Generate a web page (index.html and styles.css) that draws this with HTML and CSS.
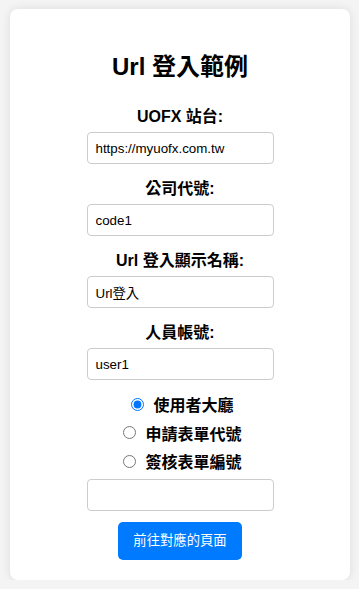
FILE: index.html
```html
<!DOCTYPE html>
<html lang="zh-Hant">
<head>
<meta charset="utf-8">
<title>Url 登入範例</title>
<link rel="stylesheet" href="styles.css">
</head>
<body>
<div class="page">
  <div class="card">
    <h2 class="title">Url 登入範例</h2>
    <div class="group">
      <label class="label">UOFX 站台:</label>
      <input class="field" type="text" value="https://myuofx.com.tw">
    </div>
    <div class="group">
      <label class="label">公司代號:</label>
      <input class="field" type="text" value="code1">
    </div>
    <div class="group">
      <label class="label">Url 登入顯示名稱:</label>
      <input class="field" type="text" value="Url登入">
    </div>
    <div class="group">
      <label class="label">人員帳號:</label>
      <input class="field" type="text" value="user1">
    </div>
    <div class="radios">
      <label class="radio-row"><input class="radio" type="radio" name="t" checked><span>使用者大廳</span></label>
      <label class="radio-row"><input class="radio" type="radio" name="t"><span>申請表單代號</span></label>
      <label class="radio-row"><input class="radio" type="radio" name="t"><span>簽核表單編號</span></label>
    </div>
    <input class="field extra" type="text" value="">
    <button class="btn" type="button">前往對應的頁面</button>
  </div>
</div>
</body>
</html>
```
FILE: styles.css
```css
html, body {
  margin: 0;
  padding: 0;
  background: #f4f4f4;
}
body {
  font-family: "Liberation Sans", Arial, "Noto Sans CJK TC", sans-serif;
  color: #000;
}
.page {
  display: flex;
  padding: 9px 0 0 10px;
}
.card {
  width: 340px;
  box-sizing: border-box;
  background: #fff;
  border-radius: 8px;
  box-shadow: 0 0 10px rgba(0, 0, 0, 0.1);
  padding: 20px 20px 20px;
  display: flex;
  flex-direction: column;
  align-items: center;
}
.title {
  font-size: 24px;
  font-weight: bold;
  line-height: 28px;
  margin: 24px 0 26px;
}
.group {
  display: flex;
  flex-direction: column;
  align-items: center;
  margin-bottom: 15px;
}
.label {
  font-size: 16px;
  font-weight: bold;
  line-height: 20px;
  margin-bottom: 5px;
}
.field {
  width: 187px;
  height: 32px;
  box-sizing: border-box;
  border: 1px solid #ccc;
  border-radius: 4px;
  padding: 0 8px;
  font-family: "Liberation Sans", Arial, "Noto Sans CJK TC", sans-serif;
  font-size: 13.33px;
  color: #000;
  background: #fff;
  margin: 0;
}
.radios {
  display: flex;
  flex-direction: column;
  align-items: center;
  margin: -5px 0 3px;
}
.radio-row {
  display: flex;
  align-items: center;
  height: 28.5px;
  font-size: 16px;
  font-weight: bold;
}
.radio {
  width: 13px;
  height: 13px;
  margin: 0 9px 0 5px;
}
.extra {
  margin-bottom: 11px;
}
.btn {
  background: #007bff;
  color: #fff;
  border: none;
  border-radius: 5px;
  padding: 10px 15px;
  font-family: "Liberation Sans", Arial, "Noto Sans CJK TC", sans-serif;
  font-size: 13.33px;
  line-height: 18px;
  cursor: pointer;
}
```
